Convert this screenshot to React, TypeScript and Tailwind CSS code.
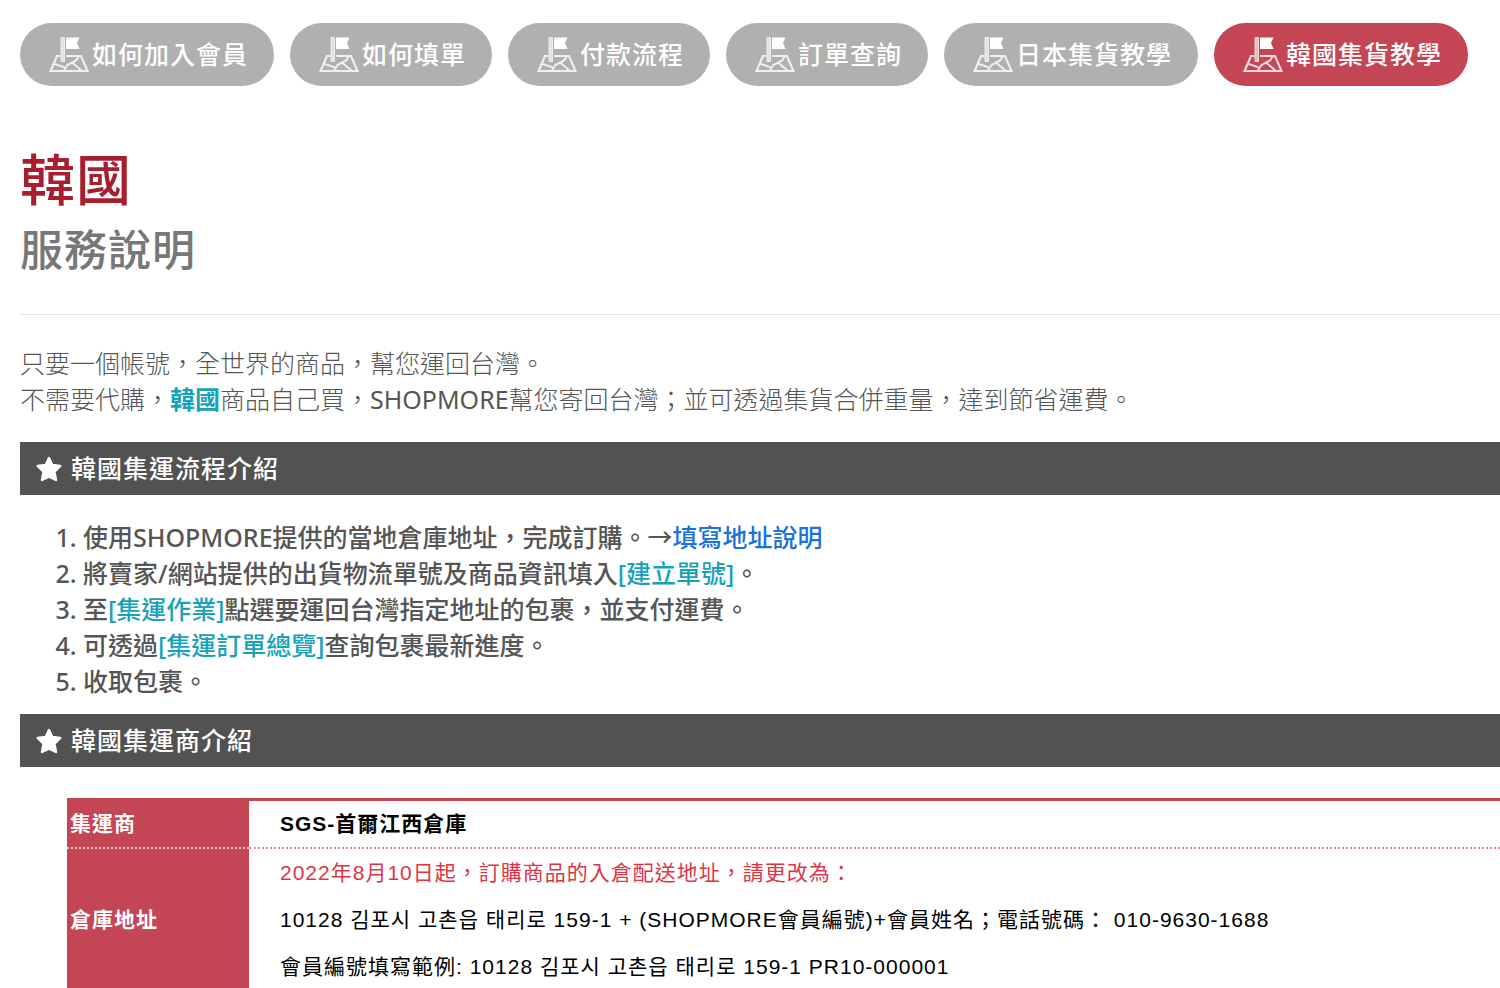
import React from 'react';
import clsx from 'clsx';

const tabs = [
  { name: '如何加入會員', active: false },
  { name: '如何填單', active: false },
  { name: '付款流程', active: false },
  { name: '訂單查詢', active: false },
  { name: '日本集貨教學', active: false },
  { name: '韓國集貨教學', active: true },
];

function FlagMapIcon() {
  return (
    <svg viewBox="0 0 40 36" className="h-9 w-10 shrink-0" fill="none" stroke="#fff" aria-hidden="true">
      <g opacity="0.8">
        <path d="M11.5 19H8L1.500 34h37L32 19H17" strokeWidth="2.2" />
        <path d="M5 27c4 .5 7 2 10.500 3.500M15 33.500l3.500-5.500 8.500-4.500 3-4.500M23.500 26l9 7.500" strokeWidth="2" />
        <path d="M12 0.500v24h3.500v-24z" fill="#fff" fillOpacity="0.8" strokeWidth="1" />
      </g>
      <path d="M17 .5h13.500L28 6l2.500 6H17z" fill="#fff" stroke="none" />
    </svg>
  );
}

function StarIcon() {
  return (
    <svg viewBox="0 0 26 26" className="size-[26px] shrink-0" fill="#fff" aria-hidden="true">
      <path
        d="M13 2 16.300 9l8 .9-5.800 5.800 1.500 8.300L13 20.700l-7 3.300 1.500-8.300L1.700 9.900l8-.9z"
        stroke="#fff"
        strokeWidth="2.400"
        strokeLinejoin="round"
      />
    </svg>
  );
}

function SectionTitle({ children }: { children: React.ReactNode }) {
  return (
    <h2 className="flex h-[53px] items-center gap-[9px] bg-[#525252] pl-4 text-[25px] font-medium tracking-[1px] text-white">
      <StarIcon />
      {children}
    </h2>
  );
}

function TextLink({ children }: { children: React.ReactNode }) {
  return (
    <a href="#" className="text-[#17a2b8]">
      {children}
    </a>
  );
}

export default function App() {
  return (
    <div
      lang="zh-Hant"
      className="min-h-screen overflow-x-hidden bg-white pt-[23px] pl-5 font-['Noto_Sans','Noto_Sans_CJK_TC',sans-serif] text-[#555]"
    >
      <nav className="flex flex-wrap gap-4">
        {tabs.map((tab) => (
          <a
            key={tab.name}
            href="#"
            className={clsx(
              'flex h-[63px] items-center gap-[3px] rounded-full pr-[26px] pl-[29px] text-[25px] font-medium tracking-[1px] whitespace-nowrap text-white',
              tab.active ? 'bg-[#c44553]' : 'bg-[#b0b0b0]'
            )}
          >
            <FlagMapIcon />
            {tab.name}
          </a>
        ))}
      </nav>

      <header className="mt-[58px] border-b border-[#e5e5e5] pb-[30px]">
        <h1 className="mb-0.5 text-[55px] leading-[70px] font-medium tracking-[1px] text-[#a91e2f]">韓國</h1>
        <p className="text-[43px] leading-[68px] font-medium tracking-[1px] text-[#777]">服務說明</p>
      </header>

      <p className="mt-[30px] text-[25px] leading-9 font-light">
        只要一個帳號，全世界的商品，幫您運回台灣。
        <br />
        不需要代購，<b className="font-bold text-[#17a2b8]">韓國</b>
        商品自己買，<span className="font-normal">SHOPMORE</span>幫您寄回台灣；並可透過集貨合併重量，達到節省運費。
      </p>

      <div className="mt-[25px]">
        <SectionTitle>韓國集運流程介紹</SectionTitle>
      </div>

      <ol className="mt-6 list-decimal pl-[63px] text-[25px] leading-9 font-medium">
        <li>
          使用SHOPMORE提供的當地倉庫地址，完成訂購。→
          <a href="#" className="text-[#1a73d9]">填寫地址說明</a>
        </li>
        <li>
          將賣家/網站提供的出貨物流單號及商品資訊填入<TextLink>[建立單號]</TextLink>。
        </li>
        <li>
          至<TextLink>[集運作業]</TextLink>點選要運回台灣指定地址的包裹，並支付運費。
        </li>
        <li>
          可透過<TextLink>[集運訂單總覽]</TextLink>查詢包裹最新進度。
        </li>
        <li>收取包裹。</li>
      </ol>

      <div className="mt-[15px]">
        <SectionTitle>韓國集運商介紹</SectionTitle>
      </div>

      <div className="mt-[31px] pl-[47px]">
        <table className="w-full border-separate border-spacing-0 border-t-3 border-[#c44553] text-left font-['Liberation_Sans','Noto_Sans_CJK_TC','Noto_Sans_CJK_KR',sans-serif] text-[21px] leading-[47px] tracking-[1px] text-black">
          <tbody>
            <tr className="leading-[46px]">
              <th className="w-[182px] border-b-2 border-dotted border-[#f0c8cc] bg-[#c44553] pl-[3px] font-bold text-white">集運商</th>
              <td className="border-b-2 border-dotted border-[#e08a94] pl-[31px] font-bold">SGS-首爾江西倉庫</td>
            </tr>
            <tr>
              <th className="bg-[#c44553] pl-[3px] font-bold text-white">倉庫地址</th>
              <td className="pl-[31px]">
                <p className="text-[#dc3545]">2022年8月10日起，訂購商品的入倉配送地址，請更改為：</p>
                <p>10128 김포시 고촌읍 태리로 159-1 + (SHOPMORE會員編號)+會員姓名；電話號碼： 010-9630-1688</p>
                <p>會員編號填寫範例: 10128 김포시 고촌읍 태리로 159-1 PR10-000001</p>
              </td>
            </tr>
          </tbody>
        </table>
      </div>
    </div>
  );
}
